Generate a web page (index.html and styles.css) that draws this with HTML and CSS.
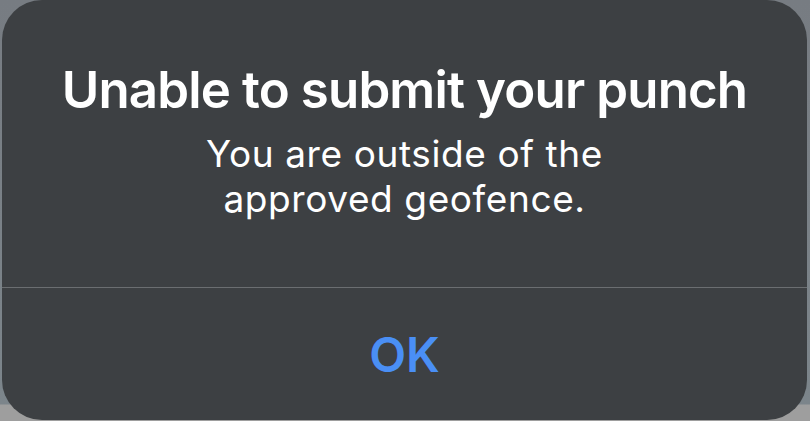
FILE: index.html
```html
<!DOCTYPE html>
<html lang="en">

<head>
  <meta charset="utf-8">
  <title>Alert</title>
  <link rel="stylesheet" href="styles.css">
</head>

<body>
  <div class="alert">
    <div class="alert-body">
      <h1 class="alert-title">Unable to submit your punch</h1>
      <p class="alert-message">You are outside of the<br>approved geofence.</p>
    </div>
    <div class="alert-actions">
      <button class="alert-button">OK</button>
    </div>
  </div>
</body>

</html>
```

FILE: styles.css
```css
html, body {
  height: 100%;
}
body {
  margin: 0;
  font-family: Inter, "Noto Sans", sans-serif;
  background: linear-gradient(to bottom, #777c82 0, #7c858b 404px, #9e9e9e 405px);
  overflow: hidden;
}
.alert {
  margin: 0 3px 0 2px;
  height: 420px;
  background-color: #3d4043;
  border-radius: 40px;
  display: flex;
  flex-direction: column;
}
.alert-body {
  height: 288px;
  box-sizing: border-box;
  padding-top: 60px;
  text-align: center;
  color: #fff;
  border-bottom: 1px solid #6b6e71;
}
.alert-title {
  margin: 0;
  font-size: 51px;
  font-weight: 600;
  line-height: 60px;
  letter-spacing: -0.85px;
}
.alert-message {
  margin: 11px 0 0;
  font-size: 37px;
  font-weight: 400;
  line-height: 45px;
  letter-spacing: 0.6px;
}
.alert-actions {
  flex: 1;
  display: flex;
  align-items: center;
  justify-content: center;
}
.alert-button {
  background: none;
  border: none;
  padding: 0;
  font-family: inherit;
  font-size: 48px;
  font-weight: 600;
  color: #4a8ff5;
  cursor: pointer;
}
```
